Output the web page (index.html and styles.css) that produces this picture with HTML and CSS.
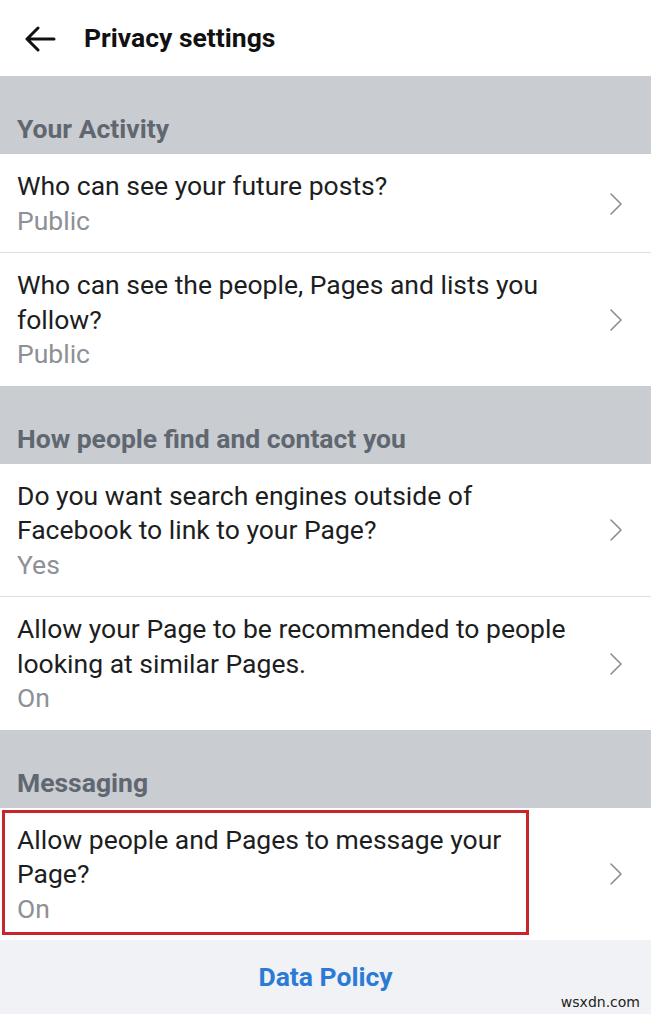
FILE: index.html
```html
<!DOCTYPE html>
<html>
<head>
<meta charset="utf-8">
<link rel="stylesheet" href="styles.css">
</head>
<body>
<div class="page">
  <header class="topbar">
    <svg class="back" width="32" height="26" viewBox="0 0 32 26">
      <path d="M30 13H3M14 2L3 13l11 11" fill="none" stroke="#111" stroke-width="3" stroke-linecap="round" stroke-linejoin="round"/>
    </svg>
    <h1 class="title">Privacy settings</h1>
  </header>

  <div class="section">Your Activity</div>
  <div class="row">
    <div class="text">
      <div class="q">Who can see your future posts?</div>
      <div class="v">Public</div>
    </div>
    <svg class="chev" width="14" height="24" viewBox="0 0 14 24"><path d="M2 2l10 10L2 22" fill="none" stroke="#8a8d91" stroke-width="1.6" stroke-linecap="round" stroke-linejoin="round"/></svg>
  </div>
  <div class="row">
    <div class="text">
      <div class="q">Who can see the people, Pages and lists you follow?</div>
      <div class="v">Public</div>
    </div>
    <svg class="chev" width="14" height="24" viewBox="0 0 14 24"><path d="M2 2l10 10L2 22" fill="none" stroke="#8a8d91" stroke-width="1.6" stroke-linecap="round" stroke-linejoin="round"/></svg>
  </div>

  <div class="section">How people find and contact you</div>
  <div class="row">
    <div class="text">
      <div class="q">Do you want search engines outside of Facebook to link to your Page?</div>
      <div class="v">Yes</div>
    </div>
    <svg class="chev" width="14" height="24" viewBox="0 0 14 24"><path d="M2 2l10 10L2 22" fill="none" stroke="#8a8d91" stroke-width="1.6" stroke-linecap="round" stroke-linejoin="round"/></svg>
  </div>
  <div class="row">
    <div class="text">
      <div class="q">Allow your Page to be recommended to people looking at similar Pages.</div>
      <div class="v">On</div>
    </div>
    <svg class="chev" width="14" height="24" viewBox="0 0 14 24"><path d="M2 2l10 10L2 22" fill="none" stroke="#8a8d91" stroke-width="1.6" stroke-linecap="round" stroke-linejoin="round"/></svg>
  </div>

  <div class="section">Messaging</div>
  <div class="row highlighted">
    <div class="text">
      <div class="q">Allow people and Pages to message your Page?</div>
      <div class="v">On</div>
    </div>
    <svg class="chev" width="14" height="24" viewBox="0 0 14 24"><path d="M2 2l10 10L2 22" fill="none" stroke="#8a8d91" stroke-width="1.6" stroke-linecap="round" stroke-linejoin="round"/></svg>
    <div class="redbox"></div>
  </div>

  <footer class="footer">
    <a class="policy">Data Policy</a>
    <span class="watermark">wsxdn.com</span>
  </footer>
</div>
</body>
</html>
```

FILE: styles.css
```css
* { box-sizing: border-box; }
html, body { margin: 0; padding: 0; background: #fff; }
body { font-family: Roboto, "Liberation Sans", sans-serif; color: #1c1e21; }
.page { width: 651px; height: 1014px; overflow: hidden; display: flex; flex-direction: column; }

.topbar { height: 76px; flex: none; display: flex; align-items: center; padding-left: 24px; padding-bottom: 1px; gap: 28px; background: #fff; }
.back { display: block; margin-top: 2px; }
.title { margin: 0; font-size: 26.5px; font-weight: 700; color: #111; }

.section { height: 78px; flex: none; background: #c9ccd1; color: #606770; font-size: 26.5px; font-weight: 700; line-height: 30px; padding: 0 17px 10px; display: flex; align-items: flex-end; }

.row { display: flex; flex: none; align-items: center; padding: 15px 28px 14px 17px; background: #fff; position: relative; }
.row + .row { border-top: 1px solid #dadde1; }
.text { flex: 1; font-size: 26.5px; line-height: 34.5px; padding-right: 30px; }
.q { color: #1c1e21; }
.v { color: #8d9095; }
.chev { display: block; flex: none; }

.redbox { position: absolute; left: 2px; top: 2px; width: 527px; height: 125px; border: 3px solid #c9262c; pointer-events: none; }

.footer { flex: 1; background: #f0f2f5; position: relative; display: flex; justify-content: center; padding-top: 20px; }
.policy { font-size: 26.5px; font-weight: 700; color: #2b7bd6; line-height: 34px; text-decoration: none; }
.watermark { position: absolute; right: 11px; bottom: 4px; font-family: "DejaVu Sans", sans-serif; font-size: 14px; color: #222; }
```
